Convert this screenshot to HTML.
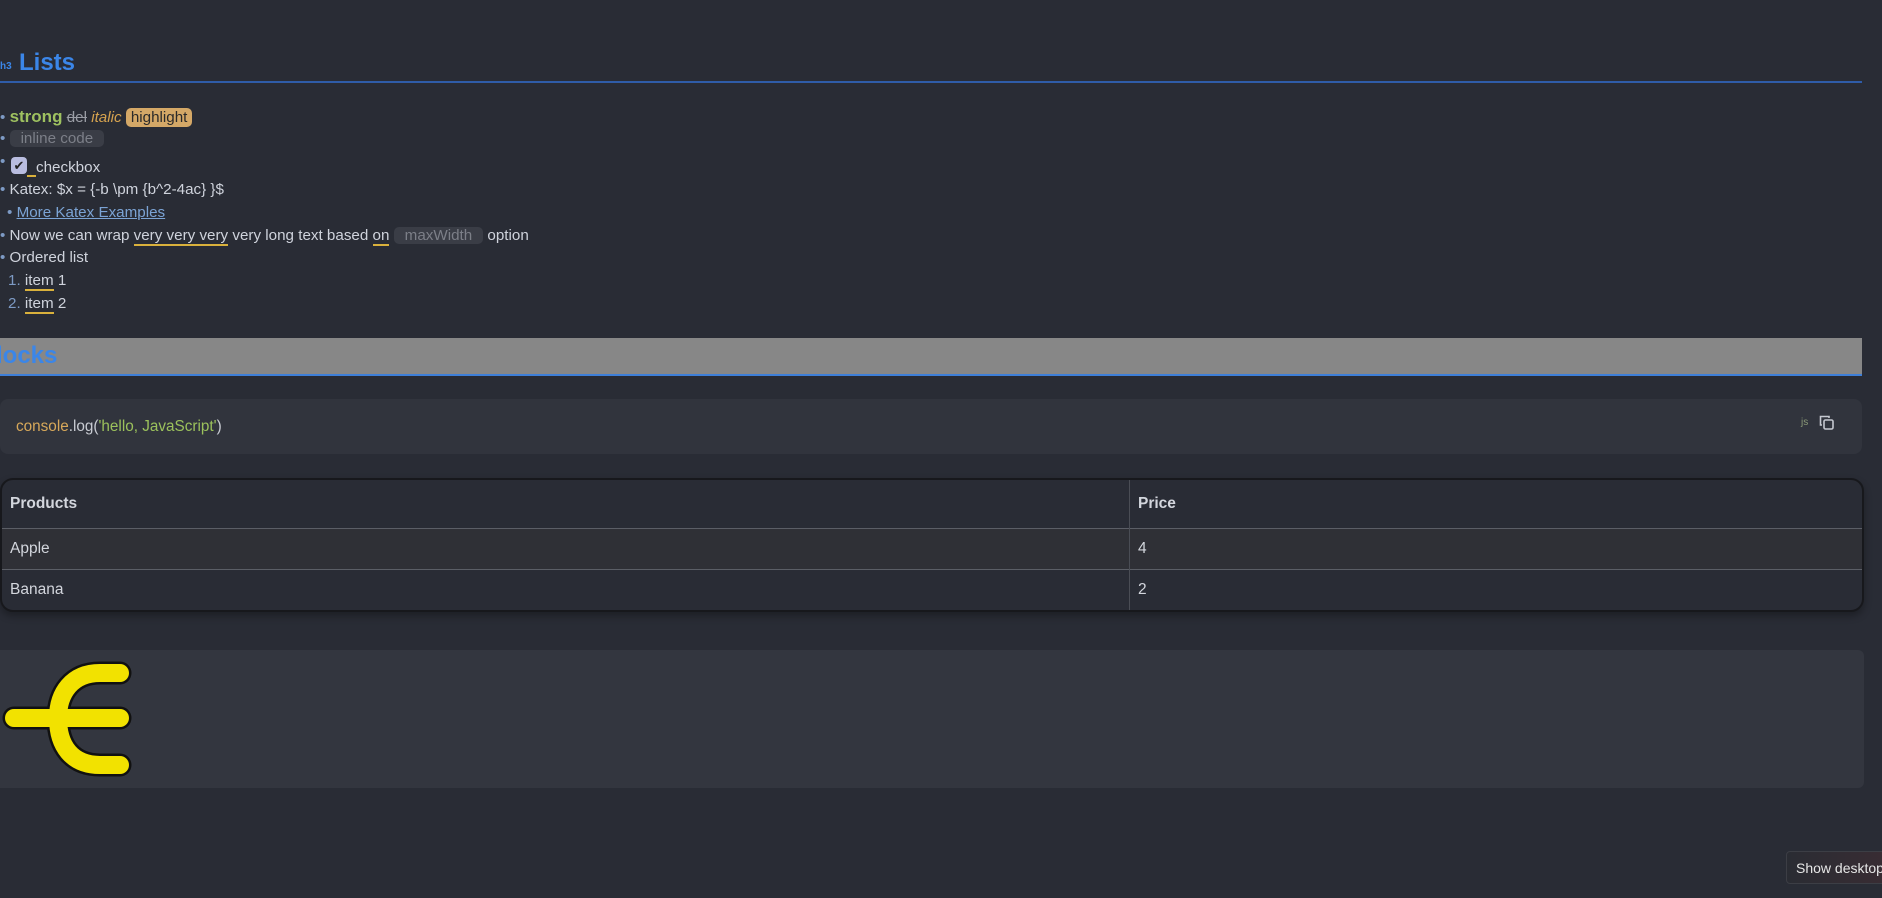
<!DOCTYPE html>
<html><head><meta charset="utf-8"><style>
body{margin:0;width:1882px;height:898px;background:#292c35;font-family:"Liberation Sans",sans-serif;color:#cfd3dc;position:relative;overflow:hidden}
.a{position:absolute}
.li{position:absolute;left:0;font-size:15.2px;white-space:nowrap;line-height:20px}
.b{color:#7d9ac4}
.u{border-bottom:2px solid #d9b13c}
.code{background:#3a3d46;color:#7c7f88;border-radius:5px;padding:0 11px}
td{border-top:1px solid #5b5e66}
</style></head><body>
<div class="a" style="left:0;top:61px;font-size:10px;color:#3b86e8;font-weight:bold">h3</div>
<div class="a" style="left:19px;top:49px;font-size:24px;color:#3b86e8;font-weight:bold">Lists</div>
<div class="a" style="left:0;top:81px;width:1862px;height:2px;background:#2f5ca8"></div>
<div class="li" style="top:107px"><span class="b">•</span> <b style="color:#9ec160;font-size:17px">strong</b> <s style="color:#9b9ea6">del</s> <i style="color:#d6a34f">italic</i> <span style="background:#d4a867;color:#2a2a2a;border-radius:5px;padding:1px 5px">highlight</span></div>
<div class="li" style="top:129px"><span class="b">•</span> <span class="code">inline code</span></div>
<div class="li" style="top:152px"><span class="b">•</span></div>
<div class="a" style="left:11px;top:157px;width:16px;height:17px;background:#b9bde0;border-radius:4px;color:#222;font-size:13px;text-align:center;line-height:17px">✔</div>
<div class="a" style="left:27px;top:175px;width:9px;height:2px;background:#d9b13c"></div>
<div class="li" style="top:158px;left:36px">checkbox</div>
<div class="li" style="top:180px"><span class="b">•</span> Katex: $x = {-b \pm {b^2-4ac} }$</div>
<div class="li" style="top:203px;left:7px"><span class="b">•</span> <span style="color:#7ba3d4;text-decoration:underline">More Katex Examples</span></div>
<div class="li" style="top:226px"><span class="b">•</span> Now we can wrap <span class="u">very very very</span> very long text based <span class="u">on</span> <span class="code">maxWidth</span> option</div>
<div class="li" style="top:248px"><span class="b">•</span> Ordered list</div>
<div class="li" style="top:271px;left:8px"><span class="b">1.</span> <span class="u">item</span> 1</div>
<div class="li" style="top:294px;left:8px"><span class="b">2.</span> <span class="u">item</span> 2</div>
<div class="a" style="left:0;top:338px;width:1862px;height:36px;background:#878787;border-bottom:2px solid #3e7fd8"></div>
<div class="a" style="left:-4px;top:342px;font-size:24px;color:#3b86e8;font-weight:bold">locks</div>
<div class="a" style="left:0;top:399px;width:1862px;height:55px;background:#31343d;border-radius:8px"></div>
<div class="a" style="left:16px;top:418px;font-size:15.3px"><span style="color:#d7a85a">console</span><span style="color:#c9ccd3">.log(</span><span style="color:#9bc15c">'hello, JavaScript'</span><span style="color:#c9ccd3">)</span></div>
<div class="a" style="left:1801px;top:417px;font-size:10px;color:#8b9a78">js</div>
<svg class="a" style="left:1818px;top:414px" width="18" height="18" viewBox="0 0 18 18" fill="none" stroke="#c5c8d0" stroke-width="1.6"><path d="M4 11H2.5V2.5H11V4"/><rect x="6" y="6" width="9" height="9" rx="1.5"/></svg>
<div class="a" style="left:0;top:478px;width:1860px;height:130px;border:2px solid #17181c;border-radius:13px;overflow:hidden;box-shadow:0 4px 8px rgba(0,0,0,.3)">
<table style="width:100%;border-collapse:collapse;font-size:15.5px;color:#d3d6dd">
<tr style="height:48px"><th style="text-align:left;padding-left:8px;width:1118px;border-right:1px solid #4a4d55">Products</th><th style="text-align:left;padding-left:8px">Price</th></tr>
<tr style="height:41px;background:#2f3036"><td style="padding-left:8px;border-right:1px solid #4a4d55">Apple</td><td style="padding-left:8px">4</td></tr>
<tr style="height:41px"><td style="padding-left:8px;border-right:1px solid #4a4d55;border-bottom:1px solid #5b5e66">Banana</td><td style="padding-left:8px;border-bottom:1px solid #5b5e66">2</td></tr>
</table></div>
<div class="a" style="left:0;top:650px;width:1864px;height:138px;background:#33363f;border-radius:0 6px 6px 0"></div>
<svg class="a" style="left:0;top:658px" width="140" height="124" viewBox="0 0 140 124"><g fill="none" stroke-linecap="round"><path d="M120 15H100C72 15 58 35 58 60C58 88 72 107 100 107H120M14 60H120" stroke="#111" stroke-width="23"/><path d="M120 15H100C72 15 58 35 58 60C58 88 72 107 100 107H120M14 60H120" stroke="#f2e200" stroke-width="18"/></g></svg>
<div class="a" style="left:1786px;top:851px;width:110px;height:33px;background:linear-gradient(90deg,#2a2c33,#3a2c33);border:1px solid #3c3e45;border-radius:4px;color:#e6e6e6;font-size:14px;line-height:33px;padding-left:9px;box-sizing:border-box">Show desktop</div>
</body></html>
